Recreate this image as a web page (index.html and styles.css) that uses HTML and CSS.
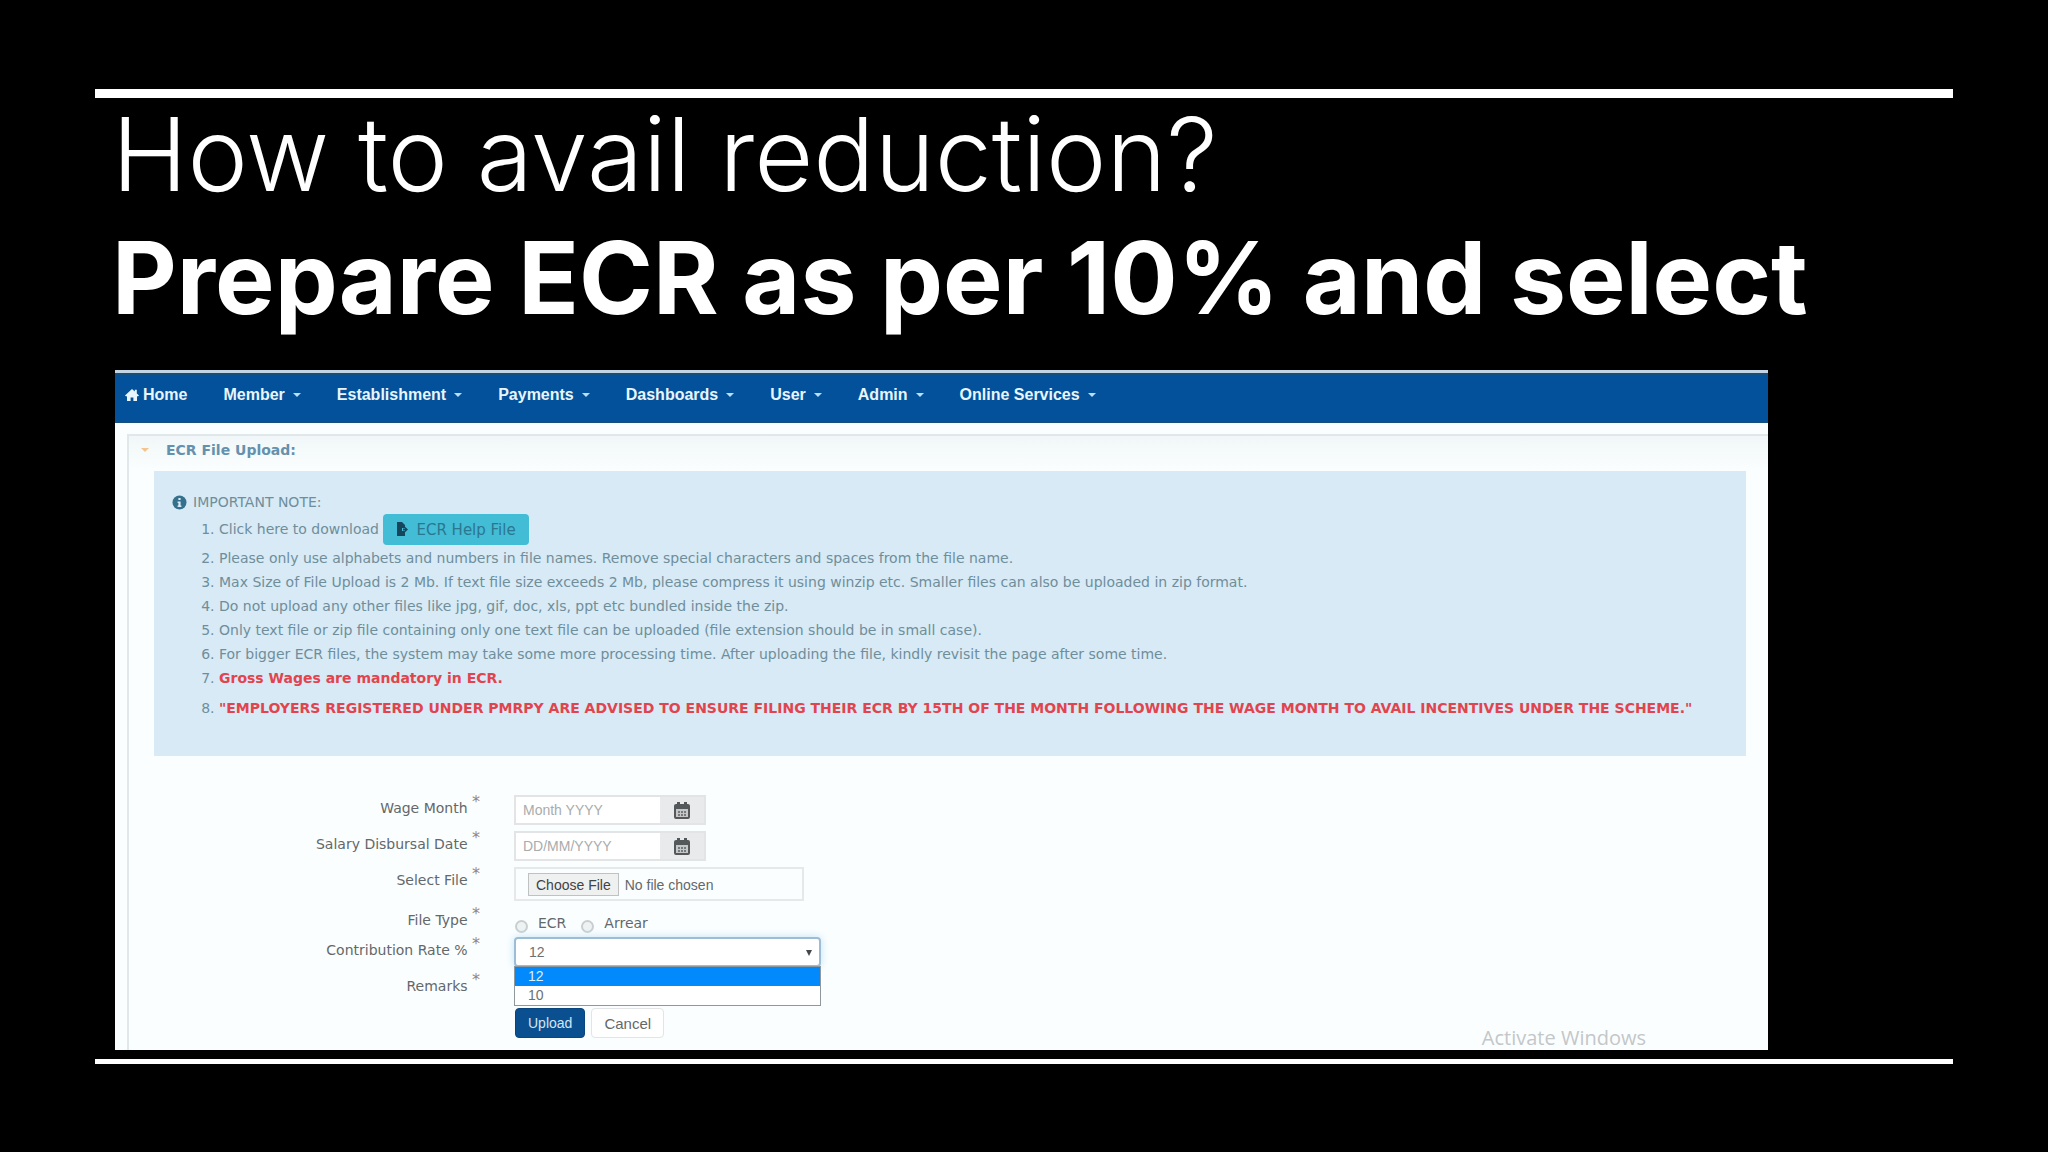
FILE: index.html
```html
<!DOCTYPE html>
<html lang="en">
<head>
  <meta charset="UTF-8" />
  <meta name="viewport" content="width=device-width, initial-scale=1.0" />
  <title>How to avail reduction?</title>
  <link rel="stylesheet" href="styles.css">
</head>
<body>

  <main class="slide">
    <h1 class="title">
      How to avail reduction?
      <strong>Prepare ECR as per 10% and select</strong>
    </h1>

    <div class="panel">
      <nav class="menu">
        <a href="#" class="home">
          <svg width="14" height="14" viewBox="0 0 14 14" aria-hidden="true">
            <path d="M7 1 L0 7.5 L1.2 8.6 L2 7.9 V13 H5.6 V9.5 H8.4 V13 H12 V7.9 L12.8 8.6 L14 7.5 L11.8 5.4 V1.8 H9.8 V3.6 Z" fill="currentColor" />
          </svg>
          Home
        </a>
        <a href="#" class="drop">Member</a>
        <a href="#" class="drop">Establishment</a>
        <a href="#" class="drop">Payments</a>
        <a href="#" class="drop">Dashboards</a>
        <a href="#" class="drop">User</a>
        <a href="#" class="drop">Admin</a>
        <a href="#" class="drop">Online Services</a>
      </nav>

      <section class="upload">
        <h2 class="upload-title">ECR File Upload:</h2>

        <div class="note">
          <p class="note-title">
            <svg width="15" height="15" viewBox="0 0 15 15" aria-hidden="true">
              <circle cx="7.5" cy="7.5" r="7" fill="#35708c" />
              <path d="M6.4 3 H8.6 V5 H6.4 Z M5.6 6.4 H8.6 V10.4 H9.4 V12 H5.6 V10.4 H6.4 V8 H5.6 Z" fill="#d7eaf5" />
            </svg>
            IMPORTANT NOTE:
          </p>
          <ol class="note-list">
            <li>Click here to download
              <a href="#" class="help">
                <svg width="12" height="15" viewBox="0 0 12 15" aria-hidden="true">
                  <path d="M1 0 H6 L9 3 V6 H6 V9 H9 V14 H1 Z" fill="#17465c" />
                  <path d="M7 6.5 H9 V4.8 L12 7.5 L9 10.2 V8.5 H7 Z" fill="#17465c" />
                </svg>
                ECR Help File
              </a>
            </li>
            <li>Please only use alphabets and numbers in file names. Remove special characters and spaces from the file name.</li>
            <li>Max Size of File Upload is 2 Mb. If text file size exceeds 2 Mb, please compress it using winzip etc. Smaller files can also be uploaded in zip format.</li>
            <li>Do not upload any other files like jpg, gif, doc, xls, ppt etc bundled inside the zip.</li>
            <li>Only text file or zip file containing only one text file can be uploaded (file extension should be in small case).</li>
            <li>For bigger ECR files, the system may take some more processing time. After uploading the file, kindly revisit the page after some time.</li>
            <li><b>Gross Wages are mandatory in ECR.</b></li>
            <li class="notice"><b>"EMPLOYERS REGISTERED UNDER PMRPY ARE ADVISED TO ENSURE FILING THEIR ECR BY 15TH OF THE MONTH FOLLOWING THE WAGE MONTH TO AVAIL INCENTIVES UNDER THE SCHEME."</b></li>
          </ol>
        </div>

        <form class="form">
          <div class="row">
            <label class="name" for="wage">Wage Month <sup>*</sup></label>
            <div class="date">
              <input type="text" id="wage" placeholder="Month YYYY">
              <button type="button" aria-label="Pick wage month">
                <svg width="16" height="17" viewBox="0 0 16 17" aria-hidden="true">
                  <path d="M2 2 H3 V0 H6 V2 H10 V0 H13 V2 H14 Q16 2 16 4 V15 Q16 17 14 17 H2 Q0 17 0 15 V4 Q0 2 2 2 Z" fill="#55585a" />
                  <path d="M2 7 H14 V15 H2 Z" fill="#c4c6c7" />
                  <path d="M4 9 H6 V11 H4 Z M7 9 H9 V11 H7 Z M10 9 H12 V11 H10 Z M4 12 H6 V14 H4 Z M7 12 H9 V14 H7 Z M10 12 H12 V14 H10 Z" fill="#777a7c" />
                </svg>
              </button>
            </div>
          </div>

          <div class="row">
            <label class="name" for="salary">Salary Disbursal Date <sup>*</sup></label>
            <div class="date">
              <input type="text" id="salary" placeholder="DD/MM/YYYY">
              <button type="button" aria-label="Pick disbursal date">
                <svg width="16" height="17" viewBox="0 0 16 17" aria-hidden="true">
                  <path d="M2 2 H3 V0 H6 V2 H10 V0 H13 V2 H14 Q16 2 16 4 V15 Q16 17 14 17 H2 Q0 17 0 15 V4 Q0 2 2 2 Z" fill="#55585a" />
                  <path d="M2 7 H14 V15 H2 Z" fill="#c4c6c7" />
                  <path d="M4 9 H6 V11 H4 Z M7 9 H9 V11 H7 Z M10 9 H12 V11 H10 Z M4 12 H6 V14 H4 Z M7 12 H9 V14 H7 Z M10 12 H12 V14 H10 Z" fill="#777a7c" />
                </svg>
              </button>
            </div>
          </div>

          <div class="row">
            <label class="name" for="file">Select File <sup>*</sup></label>
            <input type="file" id="file" class="file">
          </div>

          <div class="row types" role="radiogroup" aria-labelledby="type-name">
            <span class="name" id="type-name">File Type <sup>*</sup></span>
            <div class="radios">
              <input type="radio" name="type" id="ecr"><label for="ecr">ECR</label>
              <input type="radio" name="type" id="arrear"><label for="arrear">Arrear</label>
            </div>
          </div>

          <div class="row rates">
            <label class="name" for="rate">Contribution Rate % <sup>*</sup></label>
            <div class="rate">
              <select id="rate">
                <option>12</option>
                <option>10</option>
              </select>
              <ul class="options">
                <li class="active">12</li>
                <li>10</li>
              </ul>
            </div>
          </div>

          <div class="row">
            <label class="name" for="remarks">Remarks <sup>*</sup></label>
            <input type="text" id="remarks" class="remarks">
          </div>

          <div class="actions">
            <button type="submit" class="btn send">Upload</button>
            <button type="reset" class="btn">Cancel</button>
          </div>
        </form>
      </section>

      <p class="watermark">Activate Windows</p>
    </div>
  </main>

</body>
</html>
```
FILE: styles.css
```css
* { box-sizing: border-box; margin: 0; padding: 0; }

body {
  background: #000;
  color: #fff;
  font-family: "DejaVu Sans", Verdana, sans-serif;
  font-size: 14px;
  line-height: 24px;
}

.slide {
  margin: 89px 95px 0;
  padding: 0 185px 9px 20px;
  border-top: 9px solid #fff;
  border-bottom: 5px solid #fff;
}

.title {
  margin: -5px 0 31px -3px;
  font-family: Inter, sans-serif;
  font-size: 102px;
  font-weight: 300;
  line-height: 123px;
  white-space: nowrap;
}

.title strong {
  display: block;
  font-size: 100px;
  font-weight: 700;
}

.panel {
  position: relative;
  background: #fbfefe;
  border-top: 3px solid #c3d5e4;
}

/* Top menu */
.menu {
  display: flex;
  gap: 36px;
  height: 50px;
  padding: 8px 10px;
  background: #02519a;
  border-top: 2px solid #164f7c;
  border-bottom: 2px solid #164f7c;
}

.menu a {
  display: flex;
  align-items: center;
  gap: 8px;
  height: 24px;
  color: #e9f5fd;
  font-family: "Liberation Sans", Arial, sans-serif;
  font-size: 16px;
  font-weight: bold;
  text-decoration: none;
}

.menu .home { gap: 4px; }

.drop::after {
  content: "";
  border: 4px solid transparent;
  border-top-color: #b5e0f5;
  border-bottom: none;
}

/* Upload box */
.upload {
  margin: 11px 0 0 12px;
  padding-bottom: 12px;
  border: 1px solid #e1e8ea;
  border-width: 2px 0 0 2px;
}

.upload-title {
  display: flex;
  align-items: center;
  gap: 17px;
  height: 35px;
  padding: 0 12px 8px;
  background: linear-gradient(#f1f7f8, #fbfeff);
  color: #6491ad;
  font-size: 14px;
}

.upload-title::before {
  content: "";
  border: 4px solid transparent;
  border-top-color: #f3c48c;
  border-bottom: none;
}

.note {
  margin: 0 22px 0 25px;
  padding: 19px 18px 36px;
  background: #d7eaf5;
  color: #6f8e9b;
}

.note-title {
  display: flex;
  align-items: center;
  gap: 6px;
}

.note-list { padding-left: 47px; }

.note-list b { color: #e2444e; }

.notice { padding-top: 6px; }

.help {
  display: inline-flex;
  align-items: center;
  gap: 8px;
  height: 31px;
  margin-bottom: 1px;
  padding: 0 13px;
  background: #43bcd5;
  border-radius: 4px;
  color: #2b7790;
  font-size: 15px;
  text-decoration: none;
  vertical-align: middle;
}

/* Form */
.form {
  display: flex;
  flex-direction: column;
  gap: 6px;
  padding-top: 39px;
  color: #63686b;
}

.row {
  display: grid;
  grid-template-columns: 351px 1fr;
  gap: 34px;
}

.name {
  padding-top: 1px;
  text-align: right;
}

.name sup {
  font-size: 16px;
  line-height: 12px;
  color: #8f8588;
}

.form input, .form select, .btn {
  font-family: "Liberation Sans", Arial, sans-serif;
  font-size: 14px;
}

.date {
  display: flex;
  width: 192px;
  height: 30px;
  border: 2px solid #e2e4e5;
}

.date input {
  width: 144px;
  padding: 0 7px;
  border: none;
  background: #fff;
}

.date input::placeholder { color: #a9acad; }

.date button {
  display: flex;
  align-items: center;
  justify-content: center;
  flex: 1;
  border: none;
  background: #e8eaeb;
}

.form .file {
  width: 290px;
  height: 34px;
  padding: 4px 12px;
  border: 2px solid #e6e8e9;
  color: #63686b;
}

.file::file-selector-button {
  height: 23px;
  padding: 0 7px;
  margin-right: 6px;
  border: 1px solid #bfc1c2;
  background: #eff0f0;
  color: #3f4345;
  font: 14px "Liberation Sans", Arial, sans-serif;
}

.types { height: 24px; }

.radios {
  display: flex;
  align-items: center;
  padding-top: 4px;
}

.radios input {
  appearance: none;
  width: 13px;
  height: 13px;
  margin: 6px 10px 0 1px;
  border: 2px solid #c9cfd0;
  border-radius: 50%;
  background: #eef2f2;
}

.radios label { margin-right: 14px; }

.rate {
  position: relative;
  width: 307px;
}

.rate select {
  appearance: none;
  width: 100%;
  height: 30px;
  padding: 0 13px;
  border: 2px solid #9dbdd6;
  border-radius: 4px;
  background: #fff;
  box-shadow: 0 0 8px #bfe3f7;
  color: #6c7072;
}

/* Arrow of the closed list */
.rate::after {
  content: "";
  position: absolute;
  top: 13px;
  right: 9px;
  border: 3px solid transparent;
  border-top: 6px solid #44484a;
  border-bottom: none;
}

.options {
  position: absolute;
  top: 29px;
  left: 0;
  right: 0;
  z-index: 1;
  border: 1px solid #8f989d;
  background: #fff;
  color: #6c7072;
  font-family: "Liberation Sans", Arial, sans-serif;
  font-size: 14px;
  line-height: 19px;
  list-style: none;
}

.options li { padding: 0 13px; }

.options .active {
  background: #0289fb;
  color: #d9f0ff;
}

.remarks {
  width: 290px;
  height: 29px;
  border: 1px solid #e2e4e5;
}

.actions {
  display: flex;
  gap: 6px;
  padding-left: 386px;
}

.btn {
  height: 30px;
  padding: 0 12px;
  border: 1px solid #e2e4e5;
  border-radius: 4px;
  background: #fff;
  color: #63686b;
}

.form .btn { font-size: 15px; }

.form .send {
  border-color: #0a467e;
  background: #0a4f90;
  color: #d2e6f5;
  font-size: 14px;
}

.watermark {
  position: absolute;
  right: 122px;
  bottom: 0;
  color: #c3c7c9;
  font-family: "Open Sans", sans-serif;
  font-size: 20px;
}
```
